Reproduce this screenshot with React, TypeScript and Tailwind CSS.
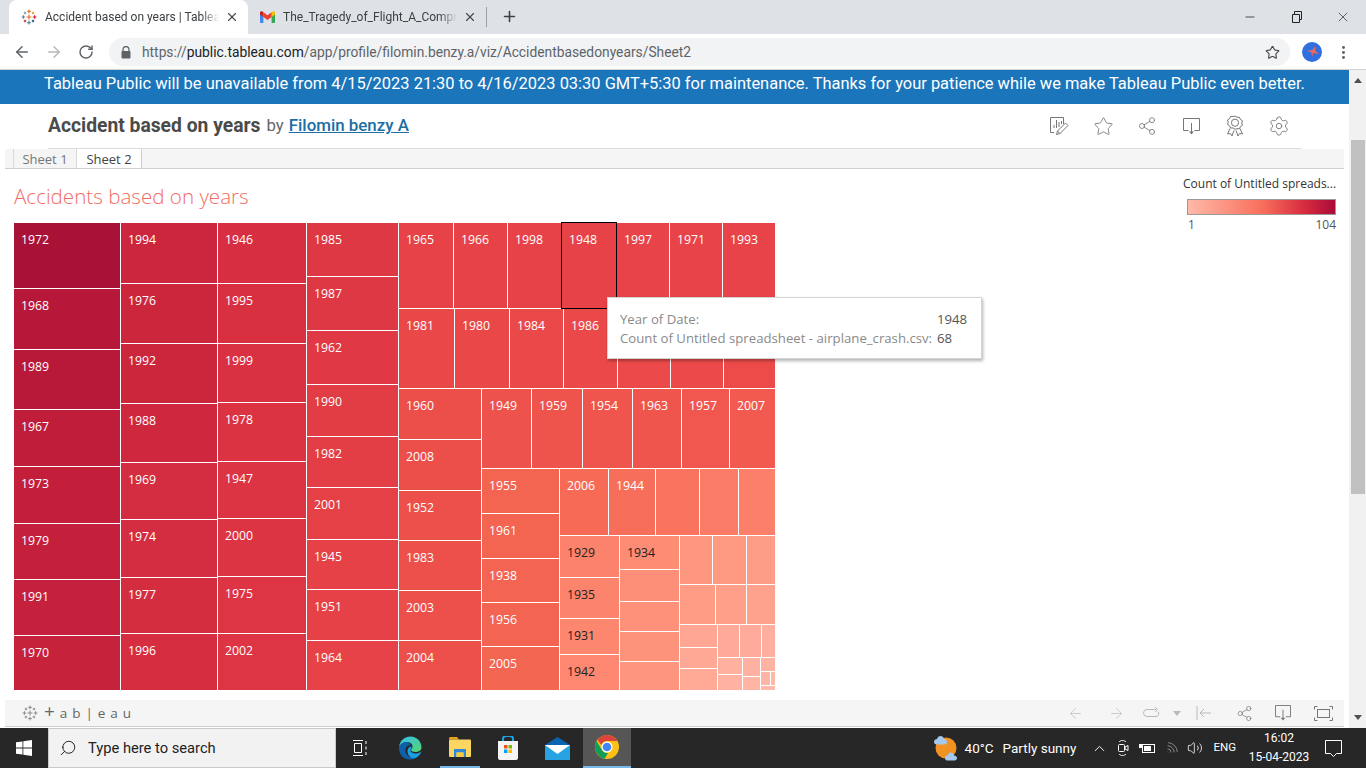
import { ArrowLeft, ArrowRight, ChevronUp, Minus, MoreVertical, Plus, RotateCw, Search, Settings, Share2, Star, Volume2, Wifi, X } from 'lucide-react';

type Cell = {
  s: number;
  d?: 'row' | 'col';
  k?: Cell[];
  c?: string;
  t?: string;
  dark?: boolean;
  sel?: boolean;
};

const leaf = (s: number, c: string, t?: string, dark?: boolean, sel?: boolean): Cell => ({ s, c, t, dark, sel });
const row = (s: number, k: Cell[]): Cell => ({ s, d: 'row', k });
const col = (s: number, k: Cell[]): Cell => ({ s, d: 'col', k });

const tree: Cell = row(761, [
  col(106, [
    leaf(65, '#a91136', '1972'),
    leaf(60, '#b71839', '1968'),
    leaf(59, '#b91939', '1989'),
    leaf(56, '#bf1d3a', '1967'),
    leaf(56, '#c31f3b', '1973'),
    leaf(55, '#c4203b', '1979'),
    leaf(55, '#c5213c', '1991'),
    leaf(54, '#c6223c', '1970'),
  ]),
  col(96, [
    leaf(60, '#cb263d', '1994'),
    leaf(59, '#cc263d', '1976'),
    leaf(59, '#cc263d', '1992'),
    leaf(58, '#cf283e', '1988'),
    leaf(56, '#d42c40', '1969'),
    leaf(57, '#d42c40', '1974'),
    leaf(55, '#d52d40', '1977'),
    leaf(56, '#d62e40', '1996'),
  ]),
  col(88, [
    leaf(60, '#d72f41', '1946'),
    leaf(59, '#d83041', '1995'),
    leaf(58, '#da3142', '1999'),
    leaf(58, '#db3342', '1978'),
    leaf(56, '#dc3442', '1947'),
    leaf(57, '#dc3442', '2000'),
    leaf(56, '#dd3543', '1975'),
    leaf(56, '#dd3543', '2002'),
  ]),
  col(91, [
    leaf(53, '#df3845', '1985'),
    leaf(53, '#df3845', '1987'),
    leaf(53, '#e03945', '1962'),
    leaf(51, '#e23c45', '1990'),
    leaf(50, '#e33e46', '1982'),
    leaf(51, '#e44046', '2001'),
    leaf(49, '#e54146', '1945'),
    leaf(50, '#e54146', '1951'),
    leaf(49, '#e64247', '1964'),
  ]),
  col(376, [
    row(85, [
      leaf(54, '#e74247', '1965'),
      leaf(53, '#e74247', '1966'),
      leaf(53, '#e74247', '1998'),
      leaf(54, '#e74247', '1948', false, true),
      leaf(52, '#e84348', '1997'),
      leaf(52, '#e84348', '1971'),
      leaf(52, '#e84348', '1993'),
    ]),
    row(79, [
      leaf(55, '#ea4848', '1981'),
      leaf(54, '#ea4848', '1980'),
      leaf(53, '#eb4949', '1984'),
      leaf(53, '#eb4949', '1986'),
      leaf(52, '#ec4a4a'),
      leaf(52, '#ec4a4a'),
      leaf(51, '#ec4b4a'),
    ]),
    row(301, [
      col(82, [
        leaf(50, '#ec4e4a', '1960'),
        leaf(50, '#ec4e4a', '2008'),
        leaf(49, '#ed4f4b', '1952'),
        leaf(49, '#ed4f4b', '1983'),
        leaf(49, '#ed504b', '2003'),
        leaf(49, '#ed504b', '2004'),
      ]),
      col(293, [
        row(79, [
          leaf(49, '#ee524c', '1949'),
          leaf(50, '#ee534c', '1959'),
          leaf(49, '#ef544d', '1954'),
          leaf(48, '#f0554d', '1963'),
          leaf(47, '#f1574e', '1957'),
          leaf(45, '#f25a4f', '2007'),
        ]),
        row(221, [
          col(77, [
            leaf(44, '#f36451', '1955'),
            leaf(44, '#f36451', '1961'),
            leaf(43, '#f36552', '1938'),
            leaf(43, '#f36552', '1956'),
            leaf(43, '#f36652', '2005'),
          ]),
          col(215, [
            row(66, [
              leaf(48, '#f66a56', '2006'),
              leaf(46, '#f76e5a', '1944'),
              leaf(43, '#f9735e'),
              leaf(38, '#fb7c66'),
              leaf(36, '#fc8069'),
            ]),
            row(154, [
              col(59, [
                leaf(41, '#fc826b', '1929', true),
                leaf(40, '#fc836c', '1935', true),
                leaf(35, '#fd866f', '1931', true),
                leaf(35, '#fd8770', '1942', true),
              ]),
              col(59, [
                leaf(33, '#fd8c75', '1934', true),
                leaf(31, '#fd8f78'),
                leaf(29, '#fd917a'),
                leaf(29, '#fe937c'),
                leaf(28, '#fe957e'),
              ]),
              col(95, [
                row(48, [leaf(32, '#fe9680'), leaf(33, '#fe9982'), leaf(28, '#fe9d87')]),
                row(39, [leaf(35, '#fe9c86'), leaf(30, '#fe9f8a'), leaf(28, '#fea18d')]),
                row(65, [
                  col(37, [leaf(22, '#ffa694'), leaf(20, '#ffa896'), leaf(21, '#ffa997')]),
                  col(57, [
                    row(32, [leaf(21, '#ffa999'), leaf(21, '#ffab9b'), leaf(13, '#ffaf9f')]),
                    row(32, [
                      col(24, [leaf(16, '#ffb09f'), leaf(15, '#ffb2a2')]),
                      col(17, [leaf(18, '#ffb1a1'), leaf(13, '#ffb4a4')]),
                      col(14, [
                        leaf(13, '#ffb3a3'),
                        row(13, [leaf(9, '#ffb5a6'), leaf(4, '#ffb7a8')]),
                        leaf(4, '#ffb8a9'),
                      ]),
                    ]),
                  ]),
                ]),
              ]),
            ]),
          ]),
        ]),
      ]),
    ]),
  ]),
]);

function TreeNode({ n, parent }: { n: Cell; parent: 'row' | 'col' }) {
  const size = parent === 'row' ? { width: n.s } : { height: n.s };
  if (n.k) {
    return (
      <div className={n.d === 'row' ? 'flex flex-none gap-px' : 'flex flex-none flex-col gap-px'} style={size}>
        {n.k.map((c, i) => (
          <TreeNode key={i} n={c} parent={n.d as 'row' | 'col'} />
        ))}
      </div>
    );
  }
  return (
    <div
      className={`flex-none text-[12.3px] leading-[16px] ${n.t ? 'pl-[7px] pt-[9px]' : ''} ${n.dark ? 'text-[#222]' : 'text-[#fff]'} ${n.sel ? 'outline outline-1 outline-black' : ''}`}
      style={{ ...size, backgroundColor: n.c }}
    >
      {n.t}
    </div>
  );
}

function TableauMark({ colored, size = 16 }: { colored?: boolean; size?: number }) {
  const cross = (x: number, y: number, r: number, color: string, key: number) => (
    <path key={key} d={`M${x - r} ${y}H${x + r}M${x} ${y - r}V${y + r}`} stroke={colored ? color : '#8a8a8a'} strokeWidth={colored ? 1.2 : 1} fill="none" />
  );
  return (
    <svg width={size} height={size} viewBox="0 0 16 16" className="flex-none">
      {cross(8, 8, 2.5, '#e8762b', 0)}
      {cross(8, 2.4, 1.8, '#e8762b', 1)}
      {cross(8, 13.6, 1.8, '#5b879b', 2)}
      {cross(2.4, 8, 1.8, '#59879b', 3)}
      {cross(13.6, 8, 1.8, '#c72037', 4)}
      {cross(4, 4, 1.3, '#7099a6', 5)}
      {cross(12, 4, 1.3, '#eb912b', 6)}
      {cross(4, 12, 1.3, '#c72037', 7)}
      {cross(12, 12, 1.3, '#1f447e', 8)}
    </svg>
  );
}

function GmailIcon() {
  return (
    <svg width="15" height="12" viewBox="0 0 15 12" className="flex-none">
      <path d="M0 2v9a1 1 0 0 0 1 1h2.4V5.2z" fill="#4285f4" />
      <path d="M15 2v9a1 1 0 0 1-1 1h-2.4V5.2z" fill="#34a853" />
      <path d="M11.6 1.2V6L15 3.4V1.6C15 .4 13.6-.3 12.6.5z" fill="#fbbc04" />
      <path d="M3.4 6V1.2L7.5 4.3l4.1-3.1V6L7.5 9.1z" fill="#ea4335" />
      <path d="M0 1.6v1.8L3.4 6V1.2L2.4.5C1.4-.3 0 .4 0 1.6z" fill="#c5221f" />
    </svg>
  );
}

function GreyDoc() {
  return (
    <svg width="20" height="20" viewBox="0 0 20 20" fill="none" stroke="#777" strokeWidth="1">
      <path d="M14.5 8V1.5h-13v15H5" />
      <path d="M5 12V9M7.5 12V4M10 11V6M12.5 8V5" />
      <path d="M7.5 18.5l1-3.5 8-8 2.5 2.5-8 8zM8.5 15l2.5 2.5" />
    </svg>
  );
}

function RibbonIcon() {
  return (
    <svg width="18" height="22" viewBox="0 0 18 22" fill="none" stroke="#777" strokeWidth="1">
      <path d="M9 1l2 1.3 2.4-.1 1 2.2 2 1.3-.6 2.3.6 2.3-2 1.3-1 2.2-2.4-.1L9 14.300l-2-1.400-2.400.100-1-2.200-2-1.300.6-2.300-.6-2.300 2-1.300 1-2.200 2.400.100z" />
      <circle cx="9" cy="7.700" r="3.600" />
      <path d="M4 13.500L1.500 19l3-.5 1.500 2.500 2-5.500M14 13.500l2.500 5.500-3-.5-1.500 2.500-2-5.500" />
    </svg>
  );
}

function DownloadBox({ w = 17, color = '#777' }: { w?: number; color?: string }) {
  return (
    <svg width={w} height={w} viewBox="0 0 17 17" fill="none" stroke={color} strokeWidth="1">
      <path d="M5.500 12.500H.5v-12h16v12h-5" />
      <path d="M8.500 5v10" />
      <path d="M6 13.500h5L8.500 16.500z" fill={color} stroke="none" />
    </svg>
  );
}

function EdgeIcon() {
  return (
    <svg width="24" height="24" viewBox="0 0 24 24">
      <defs>
        <linearGradient id="edgeA" x1="0" y1="0" x2="1" y2="1">
          <stop offset="0" stopColor="#35c1f1" />
          <stop offset="1" stopColor="#54d36c" />
        </linearGradient>
      </defs>
      <path d="M1 11C2 4 7 .5 12.500.5 19 .5 23.500 5.500 23.500 11.500c0 3-3 4.500-6 4.500-2.500 0-4.500-.8-4.500-2 0-.8 1.500-1 1.500-3.500C14.500 7 11 5.500 8 6 4.500 6.500 2 8.500 1 11z" fill="url(#edgeA)" />
      <path d="M1 11c1.500-3 4-5 7.500-5C11.500 6 13 8 12 9.500 9 9 7 11.500 7.500 15c.5 4.500 5 8 10.500 7-2 1.200-4 1.500-6 1.500C5 23.500.5 18 1 11z" fill="#0f5fa8" />
      <path d="M9.500 15c0-3 2-4.500 4-4.500.500 2-1 2.500-1 4 0 2 3 3 5.500 3 2.500 0 4.500-1 5.500-2.500-1 4-4 6.500-7 7.300-4 .6-7-3.300-7-7.300z" fill="#1b9de2" />
    </svg>
  );
}

function ExplorerIcon() {
  return (
    <svg width="22" height="20" viewBox="0 0 22 20">
      <path d="M0 1.500C0 .7.700 0 1.500 0H8l2 2.500H0z" fill="#e8a317" />
      <rect x="0" y="2.500" width="22" height="17.500" rx="1" fill="#fcd660" />
      <path d="M5 12h12v8h-2.500v-4.500h-7V20H5z" fill="#2e8ad8" />
      <rect x="7.500" y="15.500" width="7" height="4.500" fill="#f6c945" />
    </svg>
  );
}

function StoreIcon() {
  return (
    <svg width="22" height="24" viewBox="0 0 22 24">
      <path d="M6 6V3a3 3 0 0 1 3-3h4a3 3 0 0 1 3 3v3" fill="none" stroke="#1aa3e8" strokeWidth="2" />
      <path d="M1 5h20v17a2 2 0 0 1-2 2H3a2 2 0 0 1-2-2z" fill="#f4f4f4" />
      <rect x="7" y="9" width="3.500" height="3.500" fill="#f25022" />
      <rect x="11.500" y="9" width="3.500" height="3.500" fill="#7fba00" />
      <rect x="7" y="13.500" width="3.500" height="3.500" fill="#00a4ef" />
      <rect x="11.500" y="13.500" width="3.500" height="3.500" fill="#ffb900" />
    </svg>
  );
}

function MailIcon() {
  return (
    <svg width="25" height="23" viewBox="0 0 25 23">
      <path d="M12.500 0L25 8v15H0V8z" fill="#0b64b1" />
      <path d="M0 8h25v15H0z" fill="#27a3e4" />
      <path d="M0 8l12.500 9L25 8H0z" fill="#ffffff" />
    </svg>
  );
}

function ChromeIcon({ size = 24 }: { size?: number }) {
  return (
    <svg width={size} height={size} viewBox="0 0 24 24">
      <circle cx="12" cy="12" r="12" fill="#fbc116" />
      <path d="M12 0a12 12 0 0 1 10.400 6H12a6 6 0 0 0-5.700 4L2.500 5A12 12 0 0 1 12 0z" fill="#db4437" />
      <path d="M1.600 6L7 15a6 6 0 0 0 6 3l-3.500 5.700A12 12 0 0 1 1.600 6z" fill="#0f9d58" />
      <circle cx="12" cy="12" r="5.500" fill="#fff" />
      <circle cx="12" cy="12" r="4.300" fill="#4285f4" />
    </svg>
  );
}

function WeatherIcon() {
  return (
    <svg width="24" height="28" viewBox="0 0 24 28">
      <circle cx="12" cy="14" r="10.500" fill="#f19322" />
      <path d="M0 8c0-2 1.500-3 3-3 .5-2 2-3 3.500-3 2 0 3.500 1.500 3.500 3 2 0 3 1.200 3 3s-1 2.500-3 2.500H3C1 10.500 0 9.500 0 8z" fill="#a5c9ee" />
      <path d="M11 24c0-2 1.200-2.500 2.500-2.500.5-2 2-3 3.500-3s3 1.500 3 3c1.500 0 3 1 3 2.500s-1 2.500-2.500 2.500H13C11.800 26.500 11 25.500 11 24z" fill="#a5c9ee" />
    </svg>
  );
}

function TopBar() {
  return (
    <div className="flex h-[34px] flex-none items-end bg-[#dee1e6] font-['Roboto',sans-serif] text-[12px] text-[#3c4043]">
      <div className="ml-[9px] flex h-[34px] w-[239px] items-center rounded-t-[8px] bg-white pl-[12px] pr-[9px]">
        <TableauMark colored />
        <span className="ml-[8px] w-[174px] whitespace-nowrap [mask-image:linear-gradient(to_right,black_90%,transparent)]">Accident based on years | Tablea</span>
        <X size={14} className="ml-auto text-[#45494d]" />
      </div>
      <div className="flex h-[34px] w-[238px] items-center pl-[12px] pr-[9px]">
        <GmailIcon />
        <span className="ml-[8px] w-[174px] whitespace-nowrap text-[12px] [mask-image:linear-gradient(to_right,black_90%,transparent)]">The_Tragedy_of_Flight_A_Compre</span>
        <X size={14} className="ml-auto text-[#45494d]" />
      </div>
      <div className="mb-[7px] h-[20px] w-px bg-[#9aa0a6]" />
      <Plus size={17} strokeWidth={2.2} className="mb-[9px] ml-[14px] text-[#3c4043]" />
      <div className="ml-auto flex h-[34px] items-center text-[#222]">
        <Minus size={14} strokeWidth={1.3} className="mr-[34px]" />
        <svg width="12" height="12" viewBox="0 0 12 12" fill="none" stroke="#222" className="mr-[32px]">
          <path d="M1.500 3.500h7v8h-7zM3.500 3.500V.5h7v8h-2" />
        </svg>
        <X size={16} strokeWidth={1} className="mr-[15px]" />
      </div>
    </div>
  );
}

function UrlBar() {
  return (
    <div className="flex h-[36px] flex-none items-center border-b border-[#d0d2d5] bg-white pt-px font-['Roboto',sans-serif]">
      <ArrowLeft size={18} strokeWidth={2} className="ml-[13px] text-[#5f6368]" />
      <ArrowRight size={18} strokeWidth={2} className="ml-[14px] text-[#b6b8bb]" />
      <RotateCw size={16} strokeWidth={2.2} className="ml-[15px] text-[#5f6368]" />
      <div className="ml-[15px] flex h-[28px] w-[1181px] items-center rounded-full bg-[#f1f3f4] pl-[12px] pr-[10px] text-[13.8px]">
        <svg width="10" height="13" viewBox="0 0 10 13" className="flex-none">
          <path d="M2 5.500V3.500a3 3 0 0 1 6 0v2" fill="none" stroke="#5f6368" strokeWidth="1.300" />
          <rect x="0.500" y="5" width="9" height="7.500" rx="1" fill="#5f6368" />
        </svg>
        <span className="ml-[11px] whitespace-nowrap text-[#5f6368]">
          https://<span className="text-[#202124]">public.tableau.com</span>/app/profile/filomin.benzy.a/viz/Accidentbasedonyears/Sheet2
        </span>
        <Star size={15} strokeWidth={1.8} className="ml-auto text-[#45494d]" />
      </div>
      <div className="ml-[12px] flex h-[20px] w-[20px] items-center justify-center rounded-full bg-[#2f6fe0]">
        <svg width="13" height="13" viewBox="0 0 13 13">
          <path d="M6.500 11L5 6 0 5l6.500-1L9 0l.5 5 3.500 3-6-1z" fill="#f0685c" />
        </svg>
      </div>
      <MoreVertical size={17} strokeWidth={2.2} className="ml-[13px] text-[#5f6368]" />
    </div>
  );
}

function Tooltip() {
  return (
    <div className="absolute left-[607px] top-[128px] z-10 h-[62px] w-[375px] border border-[#d4d4d4] bg-white pl-[12px] pt-[12px] text-[13.2px] leading-[19px] text-[#8a8a8a] shadow-[1px_2px_3px_rgba(0,0,0,0.3)]">
      <div className="flex">
        <span className="w-[317px]">Year of Date:</span>
        <span className="text-[#555]">1948</span>
      </div>
      <div className="flex">
        <span className="w-[317px] whitespace-nowrap">Count of Untitled spreadsheet - airplane_crash.csv:</span>
        <span className="text-[#555]">68</span>
      </div>
    </div>
  );
}

function Viz() {
  return (
    <div className="relative flex h-[531px] flex-none font-['Open_Sans',sans-serif]">
      <div className="w-[1183px] flex-none pl-[14px]">
        <div className="flex h-[54px] items-start pt-[13px] text-[20.6px] font-light leading-[28px] text-[#f26d63]">Accidents based on years</div>
        <div className="flex h-[467px] text-white">
          <TreeNode n={tree} parent="row" />
        </div>
      </div>
      <div className="w-[163px] flex-none pt-[7px] text-[12px] text-[#555]">
        <div className="h-[16px] whitespace-nowrap leading-[16px] text-[#333]">Count of Untitled spreads...</div>
        <div className="ml-[4px] mt-[7px] h-[16px] w-[149px] border border-[#9a9a9a] bg-[linear-gradient(to_right,#ffb9a9,#f8705c_50%,#d7293f_80%,#a90c38)]" />
        <div className="ml-[4px] mt-[2px] flex w-[149px] justify-between leading-[16px]">
          <span className="pl-px">1</span>
          <span>104</span>
        </div>
      </div>
      <Tooltip />
    </div>
  );
}

function Page() {
  return (
    <div className="flex w-[1349px] flex-none flex-col overflow-hidden">
      <div className="flex h-[34px] flex-none items-center bg-[#1b75bb] pb-[5px] pl-[44px] font-['Roboto',sans-serif] text-[16.45px] whitespace-nowrap text-white">
        Tableau Public will be unavailable from 4/15/2023 21:30 to 4/16/2023 03:30 GMT+5:30 for maintenance. Thanks for your patience while we make Tableau Public even better.
      </div>
      <div className="flex h-[44px] flex-none items-center pl-[48px] font-['Roboto',sans-serif]">
        <span className="text-[19.3px] font-bold text-[#4a4a4a]">Accident based on years</span>
        <span className="ml-[6px] text-[16.8px] text-[#666]">by</span>
        <span className="ml-[5px] text-[16.9px] font-medium text-[#1c6ea4] underline">Filomin benzy A</span>
        <div className="ml-auto mr-[48px] flex items-center text-[#777]">
          <div className="flex w-[44px] justify-center"><GreyDoc /></div>
          <div className="flex w-[44px] justify-center"><Star size={21} strokeWidth={1} /></div>
          <div className="flex w-[44px] justify-center"><Share2 size={20} strokeWidth={1} /></div>
          <div className="flex w-[44px] justify-center"><DownloadBox /></div>
          <div className="flex w-[44px] justify-center"><RibbonIcon /></div>
          <div className="flex w-[44px] justify-center"><Settings size={22} strokeWidth={1} /></div>
        </div>
      </div>
      <div className="ml-[48px] h-px w-[1253px] flex-none bg-[#dcdcdc]" />
      <div className="ml-[5px] flex h-[20px] w-[1339px] flex-none border-b border-[#cfcfcf] bg-[#f5f5f5] pl-[8px] font-['Open_Sans',sans-serif] text-[13px] leading-[20px]">
        <div className="w-[64px] border-x border-[#d8d8d8] text-center text-[#777]">Sheet 1</div>
        <div className="h-[20px] w-[65px] border-r border-b border-[#cfcfcf] bg-white text-center text-[#444]">Sheet 2</div>
      </div>
      <Viz />
      <div className="ml-[5px] flex h-[27px] w-[1339px] flex-none items-center border-b border-[#cfcfcf] bg-[#f5f5f5] text-[#b9b9b9]">
        <div className="ml-[17px]"><TableauMark /></div>
        <span className="mb-[3px] ml-[6px] whitespace-pre font-['Open_Sans',sans-serif] text-[13.500px] font-medium leading-none tracking-[0.72px] text-[#666]">
          <span className="text-[19px] font-normal">+</span> a b | e a u
        </span>
        <div className="ml-auto flex items-center">
          <ArrowLeft size={17} strokeWidth={1} />
          <ArrowRight size={17} strokeWidth={1} className="ml-[24px]" />
          <svg width="18" height="14" viewBox="0 0 18 14" fill="none" stroke="#b9b9b9" className="ml-[18px]">
            <path d="M13 3.500H4a3.500 3.500 0 0 0 0 7h9a3 3 0 0 0 2-5M12 1l2.500 2.500L12 6" />
          </svg>
          <div className="ml-[12px] h-0 w-0 border-x-[4px] border-t-[5px] border-x-transparent border-t-[#b9b9b9]" />
          <svg width="16" height="16" viewBox="0 0 16 16" fill="none" stroke="#b9b9b9" className="ml-[15px]">
            <path d="M1 1v14M15 8H4M8 4L4 8l4 4" />
          </svg>
          <Share2 size={17} strokeWidth={1} className="ml-[24px] text-[#777]" />
          <div className="ml-[22px]"><DownloadBox w={16} /></div>
          <svg width="19" height="15" viewBox="0 0 19 15" fill="none" stroke="#777" className="ml-[23px] mr-[11px]">
            <path d="M.5 3.500v-3h3M15.500.5h3v3M18.500 11.500v3h-3M3.500 14.500h-3v-3" />
            <rect x="3.500" y="3.500" width="12" height="8" />
          </svg>
        </div>
      </div>
    </div>
  );
}

function ScrollBar() {
  return (
    <div className="flex w-[17px] flex-none flex-col items-center bg-[#f1f1f1]">
      <div className="mt-[8px] h-0 w-0 border-x-[4px] border-b-[5px] border-x-transparent border-b-[#505050]" />
      <div className="mt-[57px] h-[354px] w-[14px] bg-[#c1c1c1]" />
      <div className="mt-auto mb-[8px] h-0 w-0 border-x-[4px] border-t-[5px] border-x-transparent border-t-[#505050]" />
    </div>
  );
}

function Taskbar() {
  return (
    <div className="flex h-[40px] flex-none items-stretch bg-[#272727] font-['Roboto',sans-serif] text-[13px] text-white">
      <div className="flex w-[48px] items-center justify-center">
        <svg width="16" height="16" viewBox="0 0 16 16" fill="#fff">
          <path d="M0 2.300l6.500-.9v6.200H0zM7.300 1.300L16 0v7.600H7.300zM0 8.400h6.500v6.200L0 13.700zM7.300 8.400H16V16l-8.700-1.200z" />
        </svg>
      </div>
      <div className="flex w-[288px] items-center border border-[#c9c9c9] bg-[#f2f2f2] pl-[10px] text-[14.7px] text-[#222]">
        <Search size={18} strokeWidth={1.2} className="-scale-x-100 text-[#111]" />
        <span className="ml-[11px] mt-[1px]">Type here to search</span>
      </div>
      <div className="ml-[14px] flex w-[20px] items-center justify-center">
        <svg width="17" height="16" viewBox="0 0 17 16" fill="none" stroke="#fff">
          <path d="M1 .5h10M1 15.500h10M2.500 3.500h7v9h-7zM14 1v3M14 6.500v3M14 12v3" />
        </svg>
      </div>
      <div className="ml-[28px] flex w-[24px] items-center"><EdgeIcon /></div>
      <div className="ml-[18px] flex w-[40px] items-center justify-center border-b-[2px] border-[#76b9ed]"><ExplorerIcon /></div>
      <div className="ml-[17px] flex w-[22px] items-center"><StoreIcon /></div>
      <div className="ml-[26px] flex w-[25px] items-center"><MailIcon /></div>
      <div className="ml-[13px] flex w-[48px] items-center justify-center border-b-[2px] border-[#76b9ed] bg-[#565656]"><ChromeIcon /></div>
      <div className="ml-auto flex items-center">
        <WeatherIcon />
        <span className="ml-[7px] text-[13.500px]">40°C</span>
        <span className="ml-[9px] text-[13.500px]">Partly sunny</span>
        <ChevronUp size={17} strokeWidth={1.3} className="ml-[15px]" />
        <svg width="12" height="18" viewBox="0 0 12 18" fill="none" stroke="#fff" className="ml-[9px]">
          <path d="M2 3c2-2 5-2 7 0M2 15c2 2 5 2 7 0" />
          <rect x="1.500" y="5.500" width="6" height="7" rx="1" />
          <path d="M8 8l3-1.500v5L8 10z" />
        </svg>
        <svg width="17" height="12" viewBox="0 0 17 12" className="ml-[10px]">
          <rect x="3.500" y="2.500" width="12" height="8" fill="none" stroke="#fff" />
          <rect x="5" y="4" width="7" height="5" fill="#fff" />
          <path d="M0 2h3v4H0z" fill="#fff" />
        </svg>
        <Wifi size={15} strokeWidth={1} className="ml-[8px] rotate-45 text-[#bbb]" />
        <Volume2 size={16} strokeWidth={1.200} className="ml-[8px]" />
        <span className="ml-[10px] text-[11.5px]">ENG</span>
        <div className="ml-[14px] flex w-[58px] flex-col items-center text-[12px] leading-[19px]">
          <span>16:02</span>
          <span className="whitespace-nowrap">15-04-2023</span>
        </div>
        <svg width="17" height="17" viewBox="0 0 17 17" fill="none" stroke="#fff" className="ml-[17px] mr-[24px]">
          <path d="M.5.5h16v13h-5l-3 3-3-3h-5z" />
        </svg>
      </div>
    </div>
  );
}

export default function App() {
  return (
    <div className="flex h-[768px] w-[1366px] flex-col overflow-hidden bg-white">
      <TopBar />
      <UrlBar />
      <div className="flex h-[658px] flex-none overflow-hidden">
        <Page />
        <ScrollBar />
      </div>
      <Taskbar />
    </div>
  );
}
